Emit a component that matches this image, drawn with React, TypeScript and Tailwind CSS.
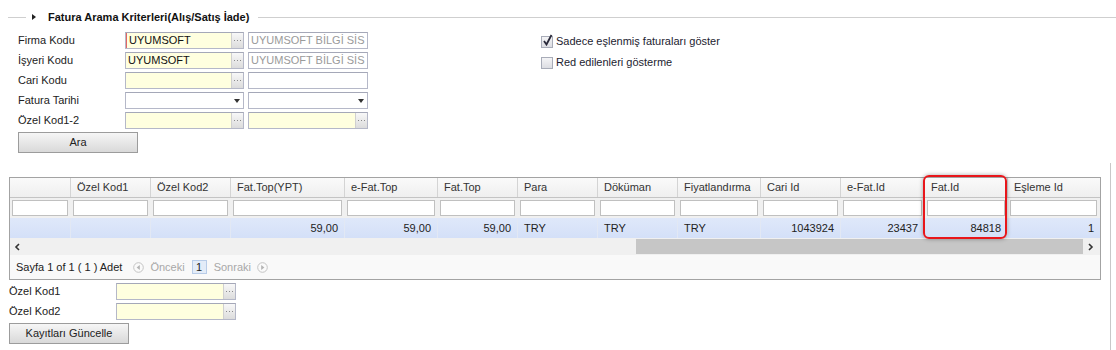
import React from "react";

// ortak giriş kutusu (lookup / combo)
type BoxProps = {
	w: string;
	value?: string;
	tone?: "yellow" | "white";
	muted?: boolean;
	required?: boolean;
	trigger?: "dots" | "arrow" | "none";
};

const Box = ({ w, value = "", tone = "yellow", muted, required, trigger = "dots" }: BoxProps) => (
	<div
		className={`flex h-[17px] flex-none border border-[#b5b8c8] border-t-[#a5a8b8] ${w} ${
			tone === "yellow" ? "bg-[#ffffdf]" : "bg-white"
		}`}
	>
		{required && <div className="w-px flex-none bg-[#e06666]" />}
		<div
			className={`min-w-0 flex-1 overflow-hidden whitespace-nowrap pl-[2px] text-[11px] leading-[15px] ${
				muted ? "text-[#9a9a9a]" : "text-[#111]"
			}`}
		>
			{value}
		</div>
		{trigger === "dots" && (
			<div className="flex w-[12px] flex-none items-center justify-center border-l border-[#d0d0d0] bg-linear-to-b from-[#f8f8f8] to-[#dcdcdc]">
				<svg width="7" height="2" viewBox="0 0 7 2">
					<rect x="0" y="0" width="1" height="1" fill="#8a8a8a" />
					<rect x="3" y="0" width="1" height="1" fill="#8a8a8a" />
					<rect x="6" y="0" width="1" height="1" fill="#8a8a8a" />
				</svg>
			</div>
		)}
		{trigger === "arrow" && (
			<div className="flex w-[12px] flex-none items-center justify-center">
				<svg width="6" height="4" viewBox="0 0 6 4">
					<path d="M0 0h6L3 4z" fill="#333" />
				</svg>
			</div>
		)}
	</div>
);

const Check = ({ on }: { on?: boolean }) => (
	<div className="relative flex h-[12px] w-[12px] flex-none items-center justify-center border border-[#a8acb8] bg-linear-to-b from-[#f4f4f6] to-[#dcdde2]">
		{on && (
			<svg width="11" height="12" viewBox="0 0 11 12" className="absolute -top-[3px] left-0">
				<path d="M2 7l2.5 3.5L9.5 1" fill="none" stroke="#2a2a3a" strokeWidth="1.8" />
			</svg>
		)}
	</div>
);

const PagerIcon = ({ dir }: { dir: "l" | "r" }) => (
	<svg width="11" height="11" viewBox="0 0 11 11">
		<circle cx="5.5" cy="5.5" r="4.8" fill="#fafafa" stroke="#c4c4c4" />
		{dir === "l" ? <path d="M6.8 3v5L3.6 5.5z" fill="#b4b4b4" /> : <path d="M4.2 3v5l3.2-2.5z" fill="#b4b4b4" />}
	</svg>
);

const cols = [
	{ w: "w-[61px]", title: "", val: "", right: false },
	{ w: "w-[80px]", title: "Özel Kod1", val: "", right: false },
	{ w: "w-[80px]", title: "Özel Kod2", val: "", right: false },
	{ w: "w-[114px]", title: "Fat.Top(YPT)", val: "59,00", right: true },
	{ w: "w-[93px]", title: "e-Fat.Top", val: "59,00", right: true },
	{ w: "w-[80px]", title: "Fat.Top", val: "59,00", right: true },
	{ w: "w-[80px]", title: "Para", val: "TRY", right: false },
	{ w: "w-[80px]", title: "Döküman", val: "TRY", right: false },
	{ w: "w-[83px]", title: "Fiyatlandırma", val: "TRY", right: false },
	{ w: "w-[80px]", title: "Cari Id", val: "1043924", right: true },
	{ w: "w-[84px]", title: "e-Fat.Id", val: "23437", right: true },
	{ w: "w-[83px]", title: "Fat.Id", val: "84818", right: true },
	{ w: "flex-1", title: "Eşleme Id", val: "1", right: true },
];

const FormRow = ({ label, children }: { label: string; children: React.ReactNode }) => (
	<div className="flex h-[17px] items-center">
		<div className="w-[125px] flex-none pl-[18px] text-[#222]">{label}</div>
		<div className="flex gap-[4px]">{children}</div>
	</div>
);

const Button = ({ w, label }: { w: string; label: string }) => (
	<div
		className={`flex h-[21px] items-center justify-center border border-[#9c9c9c] bg-linear-to-b from-[#f6f6f6] to-[#d9d9d9] text-[11px] text-[#222] ${w}`}
	>
		{label}
	</div>
);

export default function App() {
	return (
		<div className="h-[350px] w-[1116px] overflow-hidden bg-white font-['Liberation_Sans',Arial,sans-serif] text-[11px] leading-[13px] text-[#222]">
			{/* başlık */}
			<div className="mt-[10px] flex h-[14px] items-center">
				<div className="ml-[8px] h-px w-[18px] bg-[#cfcfcf]" />
				<svg width="4" height="6" viewBox="0 0 4 6" className="ml-[6px]">
					<path d="M0 0l4 3-4 3z" fill="#222" />
				</svg>
				<div className="ml-[12px] font-bold text-[#111]">Fatura Arama Kriterleri(Alış/Satış İade)</div>
				<div className="ml-[9px] h-px flex-1 bg-[#cfcfcf]" />
			</div>

			{/* form */}
			<div className="mt-[8px] flex">
				<div className="flex w-[541px] flex-none flex-col gap-[3px]">
					<FormRow label="Firma Kodu">
						<Box w="w-[119px]" value="UYUMSOFT" required />
						<Box w="w-[120px]" value="UYUMSOFT BİLGİ SİS" tone="white" muted trigger="none" />
					</FormRow>
					<FormRow label="İşyeri Kodu">
						<Box w="w-[119px]" value="UYUMSOFT" />
						<Box w="w-[120px]" value="UYUMSOFT BİLGİ SİS" tone="white" muted trigger="none" />
					</FormRow>
					<FormRow label="Cari Kodu">
						<Box w="w-[119px]" />
						<Box w="w-[120px]" tone="white" trigger="none" />
					</FormRow>
					<FormRow label="Fatura Tarihi">
						<Box w="w-[119px]" tone="white" trigger="arrow" />
						<Box w="w-[120px]" tone="white" trigger="arrow" />
					</FormRow>
					<FormRow label="Özel Kod1-2">
						<Box w="w-[119px]" />
						<Box w="w-[120px]" />
					</FormRow>
					<div className="pl-[18px]">
						<Button w="w-[120px]" label="Ara" />
					</div>
				</div>
				<div className="flex flex-col gap-[8px] pt-[3px]">
					<div className="flex items-center gap-[3px]">
						<Check on />
						<span className="text-[#1c1c30]">Sadece eşlenmiş faturaları göster</span>
					</div>
					<div className="flex items-center gap-[3px]">
						<Check />
						<span className="text-[#1c1c30]">Red edilenleri gösterme</span>
					</div>
				</div>
			</div>

			{/* liste */}
			<div className="mt-[10px] h-[200px] w-[1111px] border-r border-[#c8c8c8] pt-[14px]">
				<div className="relative ml-[9px] w-[1092px] border border-[#a3a3a3]">
					<div className="flex h-[20px] border-b border-[#c4c4c4] bg-linear-to-b from-[#fafafa] to-[#efefef]">
						{cols.map((c, i) => (
							<div
								key={i}
								className={`flex items-center overflow-hidden whitespace-nowrap border-r border-[#d4d4d4] pl-[6px] text-[#333] last:border-r-0 ${c.w}`}
							>
								{c.title}
							</div>
						))}
					</div>
					<div className="flex h-[20px] bg-[#f0f0f0]">
						{cols.map((c, i) => (
							<div key={i} className={`flex items-center pl-[2px] pr-[3px] ${c.w}`}>
								<div className="h-[16px] w-full border border-[#c0c0c0] bg-white" />
							</div>
						))}
					</div>
					<div className="flex h-[20px] bg-linear-to-b from-[#dfe8fa] to-[#d4e0f8]">
						{cols.map((c, i) => (
							<div
								key={i}
								className={`flex items-center whitespace-nowrap border-r border-[#e2e8f4] px-[6px] text-[#222] last:border-r-0 ${c.w} ${
									c.right ? "justify-end" : "justify-start"
								}`}
							>
								{c.val}
							</div>
						))}
					</div>
					<div className="flex h-[17px] items-center bg-[#f0f0f0]">
						<svg width="6" height="8" viewBox="0 0 6 8" className="ml-[4px]">
							<path d="M5 1L2 4l3 3" fill="none" stroke="#333" strokeWidth="1.6" />
						</svg>
						<div className="ml-[616px] h-[15px] w-[447px] bg-[#c6c6c6]" />
						<svg width="6" height="8" viewBox="0 0 6 8" className="ml-[5px]">
							<path d="M1 1l3 3-3 3" fill="none" stroke="#333" strokeWidth="1.6" />
						</svg>
					</div>
					<div className="flex h-[24px] items-center bg-[#f9f9f9] pl-[6px] text-[#222]">
						<span>Sayfa 1 of 1 ( 1 ) Adet</span>
						<span className="ml-[11px] flex">
							<PagerIcon dir="l" />
						</span>
						<span className="ml-[6px] text-[#a8a8a8]">Önceki</span>
						<span className="ml-[7px] flex h-[14px] w-[15px] items-center justify-center border border-[#b8cce8] bg-[#e3ecf8] text-[#222]">
							1
						</span>
						<span className="ml-[7px] text-[#a8a8a8]">Sonraki</span>
						<span className="ml-[6px] flex">
							<PagerIcon dir="r" />
						</span>
					</div>

					{/* vurgulanan sütun */}
					<div className="absolute left-[913px] top-[-3px] h-[64px] w-[84px] rounded-[6px] border-2 border-[#e8161b] shadow-[0_0_4px_rgba(0,0,0,0.35)]" />
				</div>

				{/* alt alanlar */}
				<div className="mt-[3px] flex flex-col gap-[3px] pl-[9px]">
					<div className="flex h-[17px] items-center">
						<div className="w-[107px] flex-none">Özel Kod1</div>
						<Box w="w-[120px]" />
					</div>
					<div className="flex h-[17px] items-center">
						<div className="w-[107px] flex-none">Özel Kod2</div>
						<Box w="w-[120px]" />
					</div>
					<Button w="w-[120px]" label="Kayıtları Güncelle" />
				</div>
			</div>
		</div>
	);
}
